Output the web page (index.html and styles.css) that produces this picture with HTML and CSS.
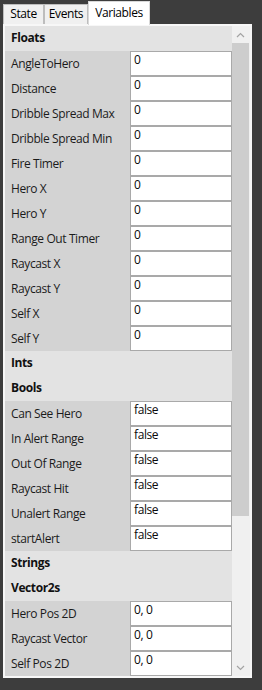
FILE: index.html
```html
<!DOCTYPE html>
<html lang="en">

<head>
    <meta charset="utf-8">
    <title>Variables</title>
    <link rel="stylesheet" href="styles.css">
</head>

<body>
    <div class="window">
        <div class="tabs">
            <div class="tab tab-state">State</div>
            <div class="tab tab-events">Events</div>
            <div class="tab tab-vars active">Variables</div>
        </div>

        <div class="panel">
            <div class="list">
                <div class="group">Floats</div>
                <div class="row"><span class="label">AngleToHero</span><span class="value">0</span></div>
                <div class="row"><span class="label">Distance</span><span class="value">0</span></div>
                <div class="row"><span class="label">Dribble Spread Max</span><span class="value">0</span></div>
                <div class="row"><span class="label">Dribble Spread Min</span><span class="value">0</span></div>
                <div class="row"><span class="label">Fire Timer</span><span class="value">0</span></div>
                <div class="row"><span class="label">Hero X</span><span class="value">0</span></div>
                <div class="row"><span class="label">Hero Y</span><span class="value">0</span></div>
                <div class="row"><span class="label">Range Out Timer</span><span class="value">0</span></div>
                <div class="row"><span class="label">Raycast X</span><span class="value">0</span></div>
                <div class="row"><span class="label">Raycast Y</span><span class="value">0</span></div>
                <div class="row"><span class="label">Self X</span><span class="value">0</span></div>
                <div class="row"><span class="label">Self Y</span><span class="value">0</span></div>

                <div class="group">Ints</div>

                <div class="group">Bools</div>
                <div class="row"><span class="label">Can See Hero</span><span class="value">false</span></div>
                <div class="row"><span class="label">In Alert Range</span><span class="value">false</span></div>
                <div class="row"><span class="label">Out Of Range</span><span class="value">false</span></div>
                <div class="row"><span class="label">Raycast Hit</span><span class="value">false</span></div>
                <div class="row"><span class="label">Unalert Range</span><span class="value">false</span></div>
                <div class="row"><span class="label">startAlert</span><span class="value">false</span></div>

                <div class="group">Strings</div>

                <div class="group">Vector2s</div>
                <div class="row"><span class="label">Hero Pos 2D</span><span class="value">0, 0</span></div>
                <div class="row"><span class="label">Raycast Vector</span><span class="value">0, 0</span></div>
                <div class="row"><span class="label">Self Pos 2D</span><span class="value">0, 0</span></div>
            </div>

            <!-- vertical scrollbar -->
            <div class="scrollbar">
                <div class="arrow">
                    <svg width="9" height="6" viewBox="0 0 9 6"><path d="M1 5 L4.5 1.5 L8 5" fill="none" stroke="#a3a3a3" stroke-width="1.2"/></svg>
                </div>
                <div class="track">
                    <div class="thumb"></div>
                </div>
                <div class="arrow">
                    <svg width="9" height="6" viewBox="0 0 9 6"><path d="M1 1 L4.5 4.5 L8 1" fill="none" stroke="#a3a3a3" stroke-width="1.2"/></svg>
                </div>
            </div>
        </div>
    </div>
</body>

</html>
```

FILE: styles.css
```css
* {
    margin: 0;
    padding: 0;
    box-sizing: border-box;
}

html,
body {
    height: 100%;
    overflow: hidden;
}

body {
    background: #3d3d3d;
    font-family: 'Segoe UI', 'Open Sans', sans-serif;
    font-size: 12px;
    letter-spacing: -0.4px;
    color: #1b1b1b;
}

.window {
    padding: 1px 10px 0 3px;
}

/* Tab strip */
.tabs {
    display: flex;
    height: 23px;
}

.tab {
    margin-top: 3px;
    height: 20px;
    line-height: 18px;
    text-align: center;
    background: #f0f0f0;
    border: 1px solid #bdbdbd;
    border-bottom: none;
    color: #000;
}

.tab-state {
    width: 41px;
}

.tab-events {
    width: 44px;
}

.tab-vars {
    width: 62px;
}

.tab.active {
    position: relative;
    z-index: 1;
    margin-top: 0;
    height: 24px;
    line-height: 21px;
    background: #fff;
    border-color: #d9d9d9;
}

/* Panel */
.panel {
    display: flex;
    height: 654px;
    border: 2px solid #f7f7f7;
    background: #f0f0f0;
}

.list {
    width: 227px;
    background: #d3d3d3;
}

.group {
    height: 25px;
    padding: 4px 0 0 6px;
    line-height: 16px;
    background: #e3e3e3;
    font-weight: bold;
    color: #111;
}

.row {
    display: grid;
    grid-template-columns: 125px 102px;
    height: 25px;
}

.label {
    padding: 5px 0 0 6px;
    line-height: 16px;
    white-space: nowrap;
}

.value {
    padding: 0 3px;
    line-height: 16px;
    background: #fff;
    border: 1px solid #a9a9a9;
    color: #0a0a0a;
}

/* Scrollbar */
.scrollbar {
    display: flex;
    flex-direction: column;
    width: 17px;
    background: #f0f0f0;
}

.arrow {
    display: flex;
    justify-content: center;
    align-items: center;
    height: 17px;
}

.track {
    flex: 1;
}

.thumb {
    height: 473px;
    background: #cdcdcd;
}
```
